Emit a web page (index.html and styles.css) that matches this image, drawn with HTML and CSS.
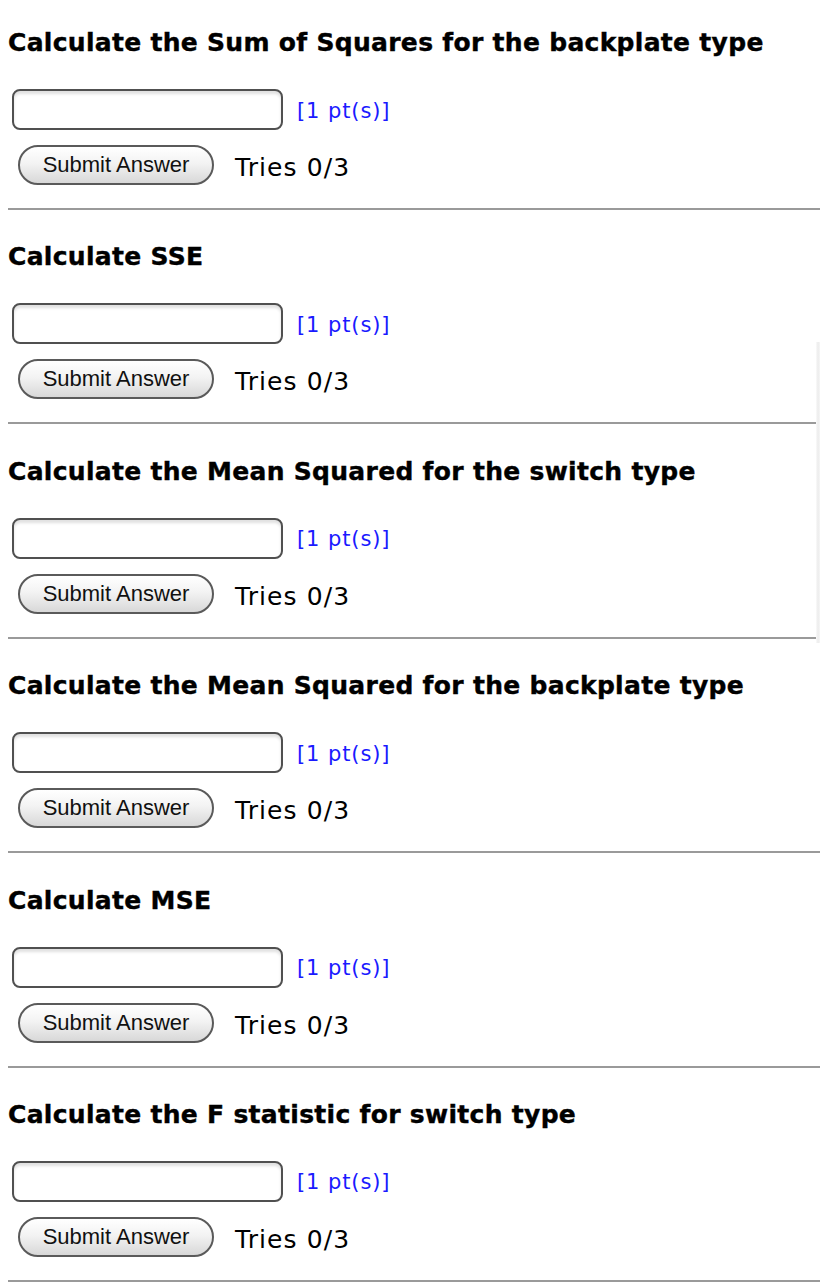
FILE: index.html
```html
<!DOCTYPE html>
<html>
<head>
<meta charset="utf-8">
<link rel="stylesheet" href="styles.css">
</head>
<body>
<div class="edge"></div>
<div class="q q-first">
  <h3 class="title">Calculate the Sum of Squares for the backplate type</h3>
  <div class="row-input"><input class="answer" type="text"><span class="pts">[1 pt(s)]</span></div>
  <div class="row-submit"><button class="submit">Submit Answer</button><span class="tries">Tries 0/3</span></div>
  <hr class="sep">
</div>
<div class="q">
  <h3 class="title">Calculate SSE</h3>
  <div class="row-input"><input class="answer" type="text"><span class="pts">[1 pt(s)]</span></div>
  <div class="row-submit"><button class="submit">Submit Answer</button><span class="tries">Tries 0/3</span></div>
  <hr class="sep">
</div>
<div class="q">
  <h3 class="title">Calculate the Mean Squared for the switch type</h3>
  <div class="row-input"><input class="answer" type="text"><span class="pts">[1 pt(s)]</span></div>
  <div class="row-submit"><button class="submit">Submit Answer</button><span class="tries">Tries 0/3</span></div>
  <hr class="sep">
</div>
<div class="q">
  <h3 class="title">Calculate the Mean Squared for the backplate type</h3>
  <div class="row-input"><input class="answer" type="text"><span class="pts">[1 pt(s)]</span></div>
  <div class="row-submit"><button class="submit">Submit Answer</button><span class="tries">Tries 0/3</span></div>
  <hr class="sep">
</div>
<div class="q">
  <h3 class="title">Calculate MSE</h3>
  <div class="row-input"><input class="answer" type="text"><span class="pts">[1 pt(s)]</span></div>
  <div class="row-submit"><button class="submit">Submit Answer</button><span class="tries">Tries 0/3</span></div>
  <hr class="sep">
</div>
<div class="q">
  <h3 class="title">Calculate the F statistic for switch type</h3>
  <div class="row-input"><input class="answer" type="text"><span class="pts">[1 pt(s)]</span></div>
  <div class="row-submit"><button class="submit">Submit Answer</button><span class="tries">Tries 0/3</span></div>
  <hr class="sep">
</div>
</body>
</html>
```

FILE: styles.css
```css
html, body {
  background: #fff;
}
body {
  margin: 8px;
  font-family: "DejaVu Sans", Verdana, sans-serif;
  color: #000;
}
.edge {
  position: absolute;
  left: 816px;
  top: 342px;
  width: 4px;
  height: 301px;
  background: linear-gradient(to right, #fafafa, #ececec, #f6f6f6);
}
.q {
  display: flex;
  flex-direction: column;
  align-items: flex-start;
  padding-top: 33.4px;
}
.q-first {
  padding-top: 21px;
}
.title {
  margin: 0 0 32px 0;
  font-size: 25px;
  line-height: 28px;
  letter-spacing: 0.3px;
  font-weight: bold;
  white-space: nowrap;
  -webkit-text-stroke: 0.4px #000;
}
.row-input {
  display: flex;
  align-items: center;
  gap: 14px;
  margin-left: 4px;
  height: 41px;
}
.answer {
  box-sizing: border-box;
  width: 271px;
  height: 41px;
  margin: 0;
  border: 2px solid #505050;
  border-radius: 8px;
  background: #fff;
  box-shadow: inset 0 3px 3px rgba(0,0,0,0.12);
  outline: none;
}
.pts {
  color: #1a1aff;
  font-size: 21px;
  letter-spacing: 0.9px;
  line-height: 24px;
  padding-top: 2px;
}
.row-submit {
  display: flex;
  align-items: center;
  gap: 21px;
  margin-top: 15px;
  margin-left: 10px;
  height: 40px;
}
.submit {
  box-sizing: border-box;
  width: 196px;
  height: 40px;
  margin: 0;
  padding: 0;
  border: 2px solid #5a5a5a;
  border-radius: 20px;
  background: linear-gradient(to bottom, #ffffff 0%, #f3f3f3 45%, #d8d8d8 100%);
  font-family: "Liberation Sans", Arial, sans-serif;
  font-size: 22px;
  color: #111;
}
.tries {
  font-size: 25px;
  letter-spacing: 1.1px;
  line-height: 30px;
  padding-top: 6px;
}
.sep {
  align-self: stretch;
  margin: 23px 0 0 0;
  height: 0;
  border: 0;
  border-top: 2px solid #9a9a9a;
}
```
